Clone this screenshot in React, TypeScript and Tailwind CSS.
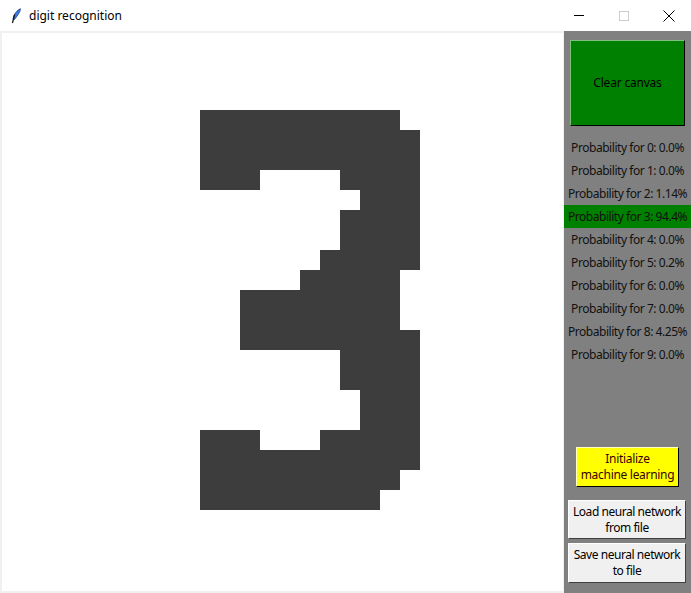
import React from "react";

const ROWS: [number, [number, number][]][] = [
  [4, [[10, 19]]],
  [5, [[10, 20]]],
  [6, [[10, 20]]],
  [7, [[10, 12], [17, 20]]],
  [8, [[18, 20]]],
  [9, [[17, 20]]],
  [10, [[17, 20]]],
  [11, [[16, 20]]],
  [12, [[15, 19]]],
  [13, [[12, 19]]],
  [14, [[12, 19]]],
  [15, [[12, 20]]],
  [16, [[17, 20]]],
  [17, [[17, 20]]],
  [18, [[18, 20]]],
  [19, [[18, 20]]],
  [20, [[10, 12], [16, 20]]],
  [21, [[10, 20]]],
  [22, [[10, 19]]],
  [23, [[10, 18]]],
];

const probs = ["0.0%", "0.0%", "1.14%", "94.4%", "0.0%", "0.2%", "0.0%", "0.0%", "4.25%", "0.0%"];

function Feather() {
  return (
    <svg width="12" height="16" viewBox="0 0 12 16">
      <path d="M10.5 0.8 C7 2 4 6 3 11 L4.5 11.5 C7 8 10 5 10.5 0.8 Z" fill="#3b7de0" stroke="#1b3f86" strokeWidth="0.8" />
      <path d="M4.6 6.5 L2.5 15" stroke="#111" strokeWidth="1.2" />
    </svg>
  );
}

export default function App() {
  return (
    <div className="w-[691px] h-[593px] flex flex-col bg-white overflow-hidden" style={{ fontFamily: '"Noto Sans", "Open Sans", sans-serif' }}>
      <div className="h-[31px] flex items-center bg-white shrink-0">
        <div className="w-[29px] flex justify-center pl-[2px]">
          <Feather />
        </div>
        <span className="text-[12px] text-black leading-none">digit recognition</span>
        <div className="ml-auto flex h-full items-center">
          <div className="w-[45px] h-full flex items-center justify-center">
            <div className="w-[10px] h-[1px] bg-black" />
          </div>
          <div className="w-[45px] h-full flex items-center justify-center">
            <div className="w-[10px] h-[10px] border border-[#cccccc]" />
          </div>
          <div className="w-[45px] h-full flex items-center justify-center">
            <svg width="12" height="12" viewBox="0 0 12 12">
              <path d="M0.5 0.5 L11.5 11.5 M11.5 0.5 L0.5 11.5" stroke="#000" strokeWidth="1" />
            </svg>
          </div>
        </div>
      </div>
      <div className="flex flex-1">
        <div className="w-[564px] bg-[#f0f0f0] pl-[2px] pt-[2px]">
          <div className="w-[561px] h-[558px] bg-white">
            <svg width="561" height="558" viewBox="0 0 561 558">
              {ROWS.flatMap(([r, ranges]) =>
                ranges.map(([a, b], i) => (
                  <rect key={`${r}-${i}`} x={a * 20 - 2} y={r * 20 - 3} width={(b - a + 1) * 20} height={20} fill="#3d3d3d" />
                ))
              )}
            </svg>
          </div>
        </div>
        <div className="w-[127px] bg-[#808080] flex flex-col">
          <div className="mt-[9px] ml-[6px] w-[115px] h-[86px] bg-[#008000] border border-t-[#7fbf7f] border-l-[#7fbf7f] border-r-black border-b-black flex items-center justify-center text-[12px] text-black tracking-[-0.2px]">
            Clear canvas
          </div>
          <div className="mt-[10px] flex flex-col">
            {probs.map((p, i) => (
              <div
                key={i}
                className={`h-[23px] flex items-center justify-center text-[12px] text-[#111] whitespace-nowrap tracking-[-0.45px] ${i === 3 ? "bg-[#008000]" : ""}`}
              >
                Probability for {i}: {p}
              </div>
            ))}
          </div>
          <div className="mt-auto ml-[12px] w-[103px] h-[40px] bg-[#ffff00] border border-t-[#ffffbf] border-l-[#ffffbf] border-r-black border-b-black flex flex-col items-center justify-center text-[12px] leading-[16px] text-[#3a0000] tracking-[-0.3px]">
            <span>Initialize</span>
            <span>machine learning</span>
          </div>
          <div className="mt-[13px] ml-[4px] w-[118px] h-[39px] bg-[#f0f0f0] border border-t-white border-l-white border-r-[#404040] border-b-[#404040] flex flex-col items-center justify-center text-[12px] leading-[16px] text-black whitespace-nowrap tracking-[-0.45px]">
            <span>Load neural network</span>
            <span>from file</span>
          </div>
          <div className="mt-[4px] mb-[10px] ml-[4px] w-[118px] h-[40px] bg-[#f0f0f0] border border-t-white border-l-white border-r-[#404040] border-b-[#404040] flex flex-col items-center justify-center text-[12px] leading-[16px] text-black whitespace-nowrap tracking-[-0.45px]">
            <span>Save neural network</span>
            <span>to file</span>
          </div>
        </div>
      </div>
    </div>
  );
}
